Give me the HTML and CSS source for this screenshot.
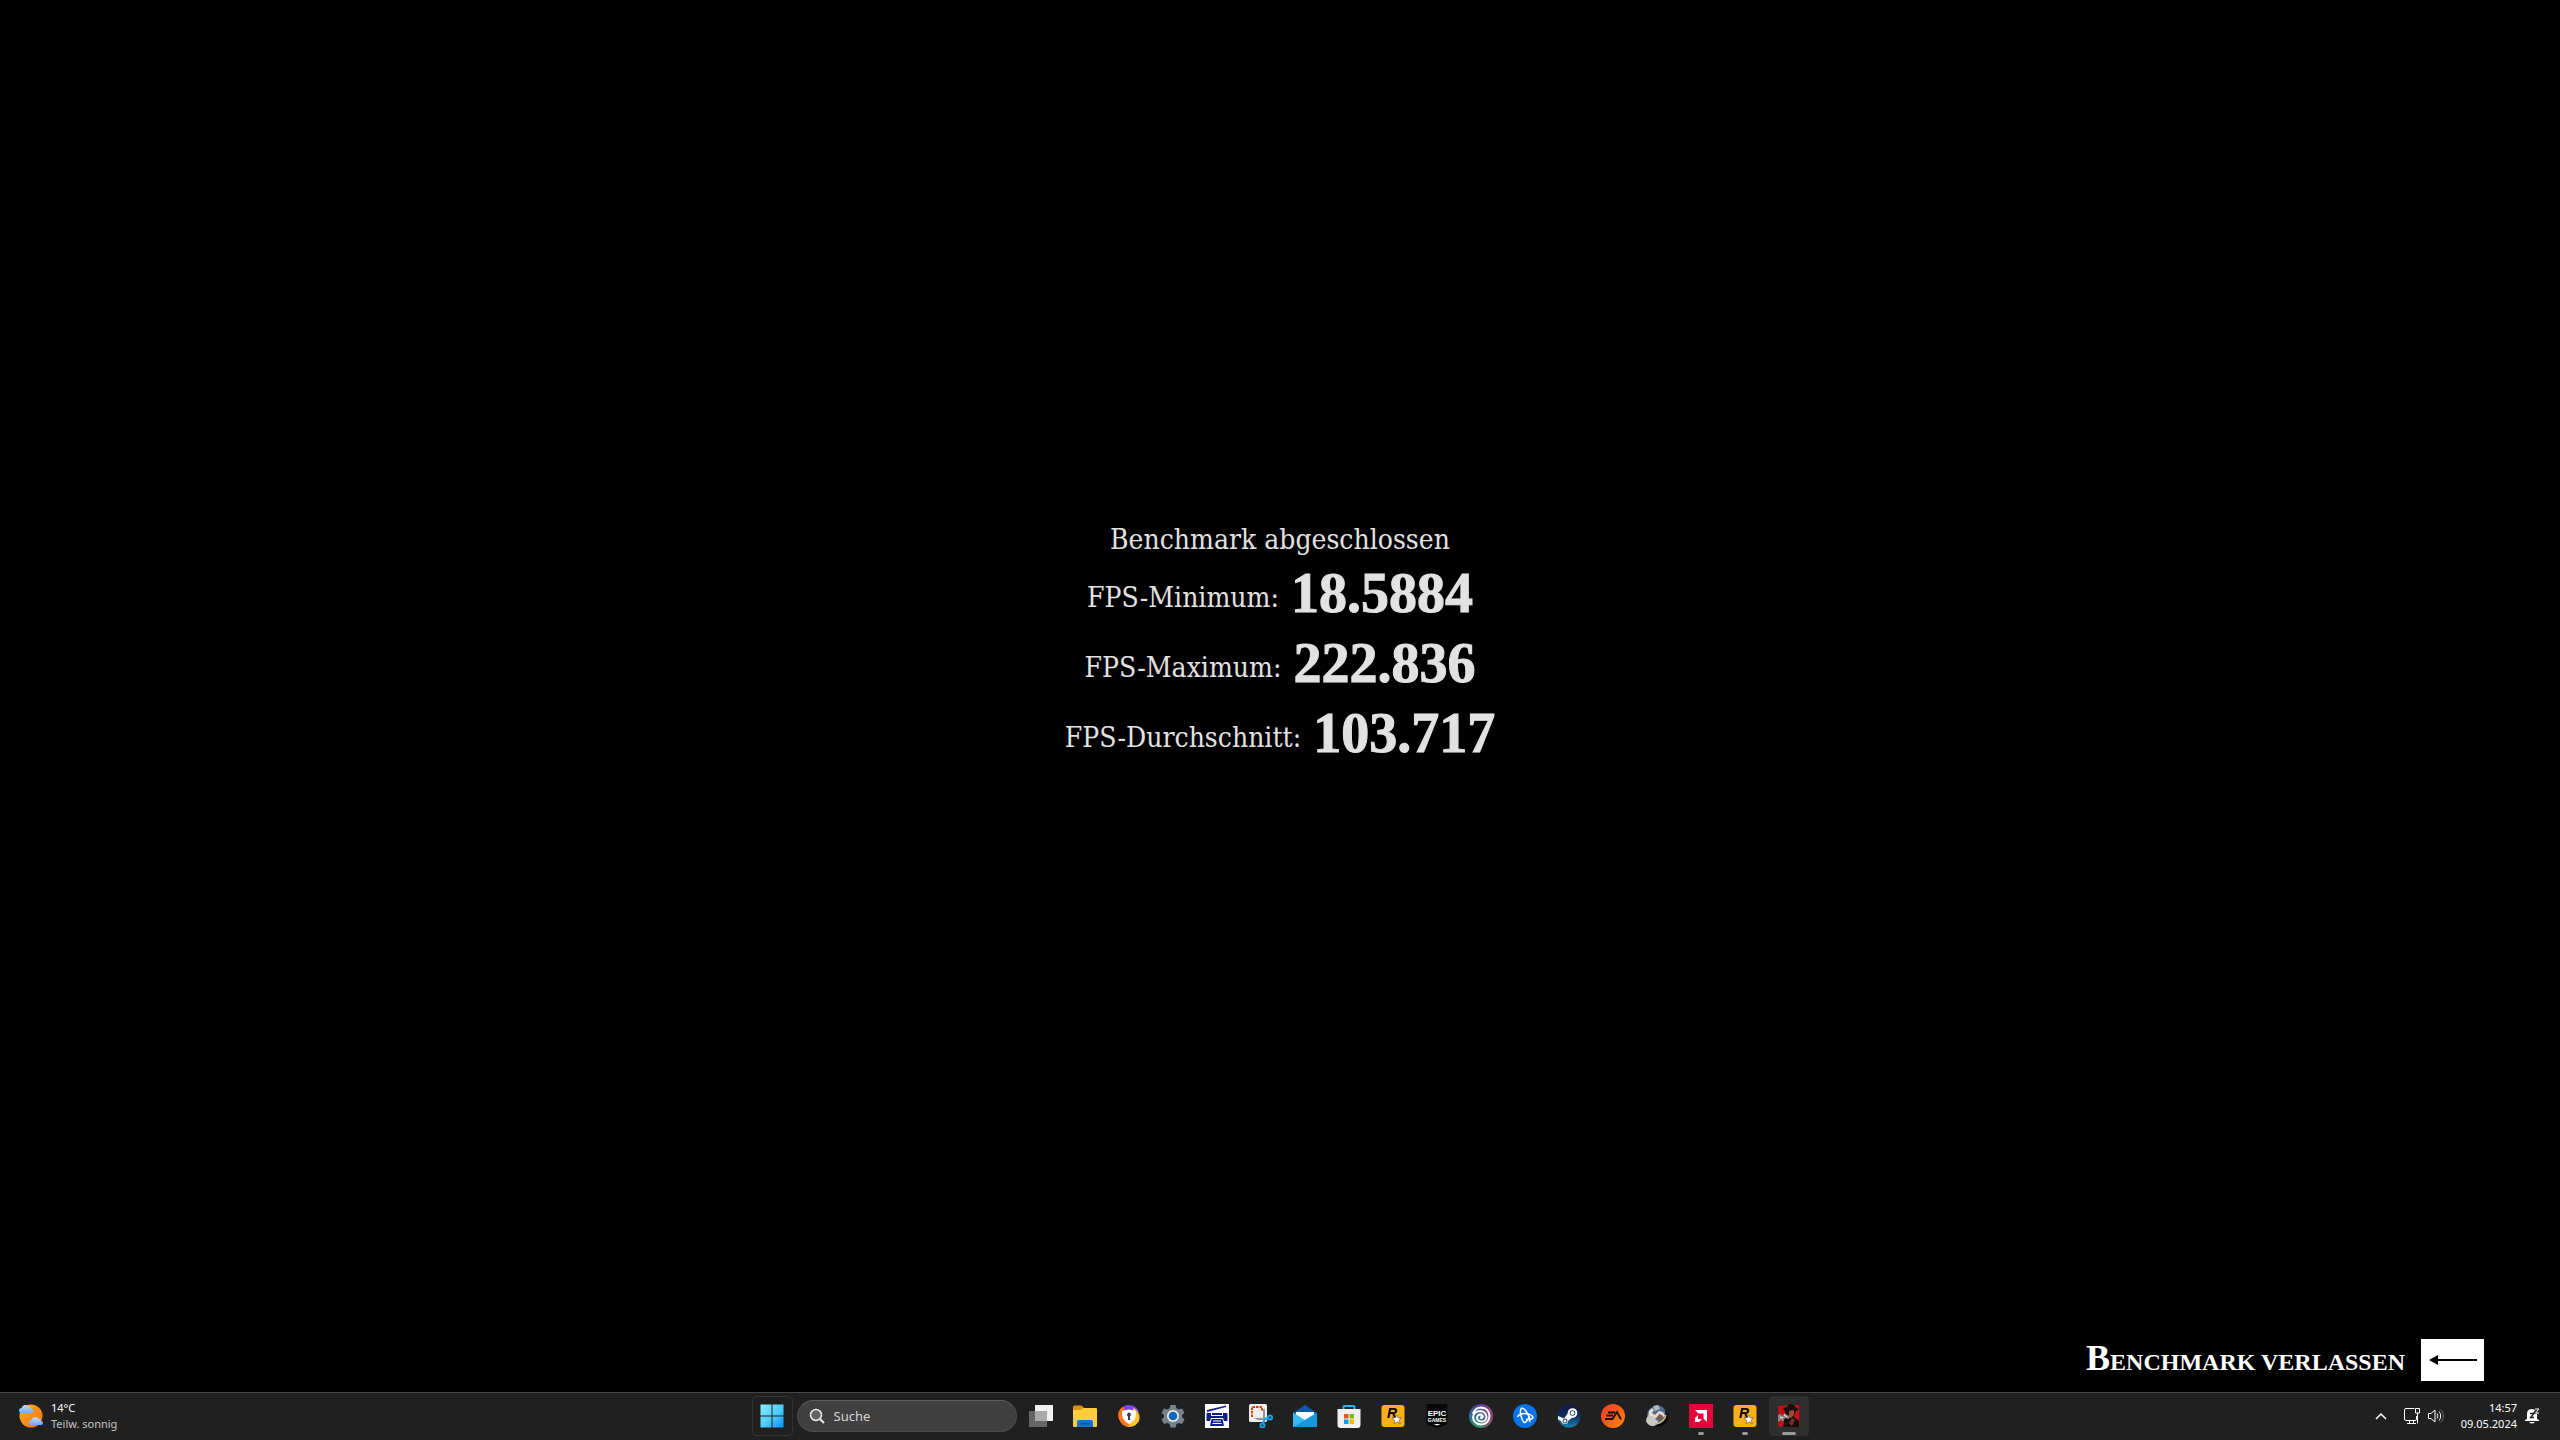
FILE: index.html
```html
<!DOCTYPE html>
<html lang="de">
<head>
  <meta charset="UTF-8">
  <meta name="viewport" content="width=device-width, initial-scale=1.0">
  <title>Benchmark</title>
  <link rel="stylesheet" href="styles.css">
</head>
<body>
  <main class="game">
    <section class="results">
      <h1>Benchmark abgeschlossen</h1>
      <dl class="stats">
        <div class="stat"><dt>FPS-Minimum:</dt><dd>18.5884</dd></div>
        <div class="stat"><dt>FPS-Maximum:</dt><dd>222.836</dd></div>
        <div class="stat"><dt>FPS-Durchschnitt:</dt><dd>103.717</dd></div>
      </dl>
    </section>

    <button class="exit">
      <span class="exit-label">Benchmark verlassen</span>
      <span class="key">
        <svg width="48" height="12" viewBox="0 0 48 12"><path d="M0 6 9 1v4h39v2H9v4z"/></svg>
      </span>
    </button>
  </main>

  <footer class="taskbar">
    <button class="weather">
      <svg width="24" height="24" viewBox="0 0 24 24">
        <defs>
          <linearGradient id="sun" x1="0" y1="0" x2="1" y2="1"><stop offset="0" stop-color="#fcb326"/><stop offset="1" stop-color="#f26a10"/></linearGradient>
          <linearGradient id="cloud" x1="0" y1="0" x2="0" y2="1"><stop offset="0" stop-color="#c3d8fb"/><stop offset="1" stop-color="#7fa6ee"/></linearGradient>
        </defs>
        <circle cx="12" cy="12" r="11.5" fill="url(#sun)"/>
        <path d="M2.500 9a2.500 2.500 0 0 1 0-5A4 4 0 0 1 9.500 2.500 2.500 2.500 0 0 1 12.500 5a2 2 0 0 1 0 4z" fill="url(#cloud)"/>
        <path d="M12.500 21a2.500 2.500 0 0 1 0-5 4 4 0 0 1 7-1.500 2.500 2.500 0 0 1 2.500 2.500 2 2 0 0 1 0 4z" fill="url(#cloud)"/>
      </svg>
      <span class="weather-text"><span>14°C</span><span class="dim">Teilw. sonnig</span></span>
    </button>

    <nav class="apps" aria-label="Apps">
      <button class="app start" aria-label="Start">
        <svg width="24" height="24" viewBox="0 0 24 24">
          <defs><linearGradient id="win" gradientUnits="userSpaceOnUse" x1="0" y1="0" x2="24" y2="24"><stop offset="0" stop-color="#8cf0ff"/><stop offset=".55" stop-color="#4ccbfa"/><stop offset="1" stop-color="#0a8bfa"/></linearGradient></defs>
          <path d="M.5.500h11v11H.5zM12.500.500h11v11h-11zM.5 12.500h11v11H.5zM12.500 12.500h11v11h-11z" fill="url(#win)"/>
        </svg>
      </button>

      <label class="search">
        <svg width="16" height="16" viewBox="0 0 16 16"><circle cx="7" cy="7" r="5.500" fill="#666" stroke="#ececec" stroke-width="1.500"/><path d="m11 11 4 4" stroke="#ececec" stroke-width="2"/></svg>
        <input type="text" placeholder="Suche" aria-label="Suche">
      </label>

      <button class="app" aria-label="Taskansicht">
        <svg width="24" height="24" viewBox="0 0 24 24">
          <path d="M6 1h18v16H6z" fill="#f1f1f1"/><path d="M0 7h18v16H0z" fill="#666"/><path d="M6 7h12v10H6z" fill="#aaa"/>
        </svg>
      </button>
      <button class="app" aria-label="Explorer">
        <svg width="24" height="24" viewBox="0 0 24 24">
          <path d="M0 3q0-1.500 1.500-1.500h7L11 4v5H0z" fill="#d9930e"/>
          <path d="M0 6h8l2.500-2H23q1 0 1 1v17q0 1-1 1H1q-1 0-1-1z" fill="#ffcd3e"/>
          <path d="M4 23v-5q0-2 2-2h12q2 0 2 2v5z" fill="#0f74cc"/><path d="M7 19h10v1.500H7z" fill="#0755a0"/>
        </svg>
      </button>
      <button class="app" aria-label="Secure Browser">
        <svg width="24" height="24" viewBox="0 0 24 24">
          <path d="M12 12 6 2.500A11 11 0 0 1 22 8z" fill="#7a45f5"/>
          <path d="M12 12 17 4q8 6 4.500 14A11 11 0 0 1 8 22z" fill="#ffc233"/>
          <path d="M12 12 12 22.500A11 11 0 0 1 6 2.500z" fill="#ff7419"/>
          <path d="M12 5.500 19 7q1 9-7 13Q4 16 5 7z" fill="#fff"/>
          <path d="M12 8.500a2.200 2.200 0 0 1 1 4V16h-2v-3.500a2.200 2.200 0 0 1 1-4z" fill="#343b58"/>
        </svg>
      </button>
      <button class="app" aria-label="Einstellungen">
        <svg width="24" height="24" viewBox="0 0 24 24">
          <path d="m9.500 1-1 3.300-2 1.100-3.500-1L.5 9 3 11v2L.5 15.500 3 20l3.500-1 2 1.100 1 3.400h5l1-3.400 2-1.100 3.500 1 2.500-4.500L21 13v-2l2.500-2L21 4.400l-3.500 1-2-1.100-1-3.300z" fill="#77828c"/>
          <circle cx="12" cy="12" r="6" fill="#e9edf1"/><circle cx="12" cy="12" r="4.300" fill="#0869bd"/>
        </svg>
      </button>
      <button class="app" aria-label="Drucker">
        <svg width="24" height="24" viewBox="0 0 24 24">
          <path d="M0 0h24v24H0z" fill="#fff"/>
          <path d="M2 6 21 1.500V3L2 8zM1.500 10q0-1 1-1H6v3h12V9h3.500q1 0 1 1v7H19l-1-3H6l-1 3H1.500zM7 9h10v2H7zM6.500 15h11l1.500 7H5z" fill="#10208a"/>
          <path d="M8 17h8M7.500 19.500h9" stroke="#fff"/>
        </svg>
      </button>
      <button class="app" aria-label="Snipping Tool">
        <svg width="24" height="24" viewBox="0 0 24 24">
          <rect width="18" height="18" rx="1.500" fill="#eeeeef"/>
          <path d="M3 13V3h10v4" fill="none" stroke="#d4420e" stroke-width="2" stroke-dasharray="2.500 1"/>
          <path d="M14 5h2v9l-2 5zM5 14h10l5-1v2l-5 1H9z" fill="#8c969f"/>
          <g fill="none" stroke="#16a1eb" stroke-width="2"><circle cx="21" cy="13.500" r="2"/><circle cx="13.500" cy="21.500" r="2"/><path d="m14 19 2-4 3-1"/></g>
        </svg>
      </button>
      <button class="app" aria-label="Mail">
        <svg width="24" height="24" viewBox="0 0 24 24">
          <path d="M0 9 12 1l12 8v4H0z" fill="#075ba9"/><path d="M3 8h18v8H3z" fill="#fafafa"/>
          <path d="M0 8.500 12 16l12-7.500V23H0z" fill="#35bdf0"/><path d="M0 23 24 9v14z" fill="#1598e0"/>
        </svg>
      </button>
      <button class="app" aria-label="Microsoft Store">
        <svg width="24" height="24" viewBox="0 0 24 24">
          <path d="M6.500 6V3q0-1 1-1h9q1 0 1 1v3" fill="none" stroke="#2cb2ec" stroke-width="2"/>
          <path d="M.5 5h23v16q0 3-3 3h-17q-3 0-3-3z" fill="#f0f0f0"/>
          <path d="M7 10h4.500v4.500H7z" fill="#f25022"/><path d="M12.500 10H17v4.500h-4.500z" fill="#7fba00"/><path d="M7 15.500h4.500V20H7z" fill="#00a4ef"/><path d="M12.500 15.500H17V20h-4.500z" fill="#ffb900"/>
        </svg>
      </button>
      <button class="app" aria-label="Rockstar Games Launcher">
        <svg width="24" height="24" viewBox="0 0 24 24">
          <rect x=".5" y="1" width="23" height="22" rx="3" fill="#fcaf17"/>
          <text x="6" y="14" class="rockstar">R</text>
          <path d="m16 11 1.200 3 3.300-.3-2.500 2.500 1.300 3.300-3.300-1.700-3 2 .5-3.800-2.500-2.300 3.500-.2z" fill="#fff" stroke="#333" stroke-width=".5"/>
        </svg>
      </button>
      <button class="app" aria-label="Epic Games">
        <svg width="24" height="24" viewBox="0 0 24 24">
          <path d="M1.500 1.500Q1.500 0 3 0h18q1.500 0 1.500 1.500V19q0 1.500-1.500 2l-9 3-9-3q-1.500-.5-1.500-2z" fill="#080808"/>
          <text x="12" y="12" class="epic">EPIC</text><text x="12" y="18" class="epic-games">GAMES</text>
          <path d="M8.500 20h7L12 21.500z" fill="#fff"/>
        </svg>
      </button>
      <button class="app" aria-label="Ubisoft Connect">
        <svg width="24" height="24" viewBox="0 0 24 24">
          <defs><linearGradient id="ubi" x1="0" y1="0" x2="0" y2="1"><stop offset="0" stop-color="#5a3c9c"/><stop offset=".5" stop-color="#2a6f9c"/><stop offset="1" stop-color="#2f9a6a"/></linearGradient><linearGradient id="ubi2"><stop offset=".4" stop-color="#963783" stop-opacity="0"/><stop offset="1" stop-color="#a63c6b"/></linearGradient></defs>
          <circle cx="12" cy="12" r="12" fill="url(#ubi)"/><circle cx="12" cy="12" r="12" fill="url(#ubi2)"/>
          <g fill="none" stroke="#fff" stroke-width="2">
            <path d="M4 10Q6 3.500 12 3.500q8 .5 8.500 8.500-.5 8-8.500 8.500-7-.5-8-7 .500-6 7-6.500 6 .500 6.500 6-.5 4.500-5 4.500-4.500-.5-4.500-4 .5-3 3.500-3 2.500.500 2.500 3"/>
          </g>
          <circle cx="12.500" cy="13.500" r="1.500" fill="#fff"/>
        </svg>
      </button>
      <button class="app" aria-label="Battle.net">
        <svg width="24" height="24" viewBox="0 0 24 24">
          <circle cx="12" cy="12" r="12" fill="#0874e8"/>
          <g fill="none" stroke="#fff" stroke-width="1.500"><path d="M8.500 4q-2 2-.5 8 2 7 4 6.500 2.500-1.500 4.500-6"/><path d="M8.500 4q3 0 6 5.500 3 5 2 8.500"/><path d="M4.500 13Q6 9.500 12 9.500q7 .5 8 4-1 2.500-7 2"/></g>
        </svg>
      </button>
      <button class="app" aria-label="Steam">
        <svg width="24" height="24" viewBox="0 0 24 24">
          <defs><linearGradient id="steam" x2="0" y2="1"><stop stop-color="#101a42"/><stop offset=".5" stop-color="#102d5d"/><stop offset="1" stop-color="#1684b9"/></linearGradient></defs>
          <circle cx="12" cy="12" r="11.500" fill="url(#steam)"/>
          <path d="m1 12 6 2.500 4-5.500 5 4-5 4q0 3-3 3t-4-3L1 15.500z" fill="#fff"/>
          <circle cx="15.500" cy="9" r="3.800" fill="#173359" stroke="#fff" stroke-width="2"/><circle cx="15.500" cy="9" r="2" fill="#fff"/>
          <circle cx="8" cy="17" r="2" fill="none" stroke="#173b6c"/>
        </svg>
      </button>
      <button class="app" aria-label="EA">
        <svg width="24" height="24" viewBox="0 0 24 24">
          <defs><linearGradient id="ea" x1="0" y1="0" x2="1" y2="1"><stop stop-color="#ef3b2d"/><stop offset=".5" stop-color="#fa5d16"/><stop offset="1" stop-color="#ff8b08"/></linearGradient></defs>
          <circle cx="12" cy="12" r="12" fill="url(#ea)"/>
          <path d="M7 8.500h7M5.500 11.500H12M4 15h7.500L16 8l4 7.500" fill="none" stroke="#131313" stroke-width="1.800"/>
        </svg>
      </button>
      <button class="app" aria-label="Globus">
        <svg width="24" height="24" viewBox="0 0 24 24">
          <circle cx="13.500" cy="13" r="9.500" fill="#080808"/>
          <path d="M2 13Q1 5 10 2q7-2 10 4l1 8-7 6-8 2-5-4z" fill="#526b8c"/>
          <path d="m4 7 3-3 2 2-2 3 3 2 4-4 4 1 2 4-3 2-4-2-5 5-5-2z" fill="#dedbd2"/>
          <path d="m8 2 5-1 2 4-5 2z" fill="#b0b8bf"/><path d="m14 10 3 1 2 3-4 3-3-3z" fill="#765a42"/>
          <path d="M2 13q6-3 8 2l3 2q-1 5-5 5-5 0-7-5z" fill="#cbc6c2"/>
          <path d="M10 20q9-1 11-9" fill="none" stroke="#c9b388" stroke-width="1.500"/>
        </svg>
      </button>
      <button class="app running" aria-label="AMD Software">
        <svg width="24" height="24" viewBox="0 0 24 24">
          <path d="M0 0h24v24H0z" fill="#e4063a"/>
          <path d="M6 6h12v12l-3.500-3.500v-5h-5z" fill="#fff"/><path d="M9 11v4h4l-3 3H6v-4z" fill="#fff"/>
        </svg>
      </button>
      <button class="app running" aria-label="Rockstar Games Launcher">
        <svg width="24" height="24" viewBox="0 0 24 24">
          <rect x=".5" y="1" width="23" height="22" rx="3" fill="#fcaf17"/>
          <text x="6" y="14" class="rockstar">R</text>
          <path d="m16 11 1.200 3 3.300-.3-2.500 2.500 1.300 3.300-3.300-1.700-3 2 .5-3.800-2.500-2.300 3.500-.2z" fill="#fff" stroke="#333" stroke-width=".5"/>
        </svg>
      </button>
      <button class="app running active" aria-label="Red Dead Redemption 2">
        <svg width="24" height="24" viewBox="0 0 24 24">
          <path d="M1 2 22 1l.5 21-21 1z" fill="#c21217"/>
          <path d="m6 4 4-1 2-3 5 1 2 3 3 1-4 3-1 5 5 4v6H6l1-5-5-3 1-4 5 1V7z" fill="#180e0e"/>
          <path d="m12 7 5-1v5l-3 3-2-2z" fill="#9b4e37"/>
          <path d="m1 11 3-1 1 2 3-3 2 2 3 1-1 3-4-1-2 4-2-2-3 2z" fill="#8d8587"/>
          <path d="m15 14 3 2-3 6-3-3z" fill="#733126"/><path d="m3 13 3 1M7 11l3 2" stroke="#eee"/>
        </svg>
      </button>
    </nav>

    <div class="tray">
      <button class="tray-btn" aria-label="Ausgeblendete Symbole">
        <svg width="12" height="8" viewBox="0 0 12 8"><path d="m1 7 5-5 5 5" fill="none" stroke="#fff" stroke-width="1.500"/></svg>
      </button>
      <button class="tray-btn quick" aria-label="Netzwerk und Ton">
        <svg width="16" height="16" viewBox="0 0 16 16"><path d="M10.500.500H2Q.5.500.5 2v9q0 1.500 1.500 1.500h9q1.500 0 1.500-1.500V8M5.500 12.500v3m4-3v3M3 15.500h9M11.500.500h4V5h-4zM13.500 5v10.500" fill="none" stroke="#fff"/></svg>
        <svg width="16" height="16" viewBox="0 0 16 16"><g fill="none" stroke="#fff"><path d="M.5 5.500H3l4-3.500v12l-4-3.500H.5zM9 5.500q2 2.500 0 5M11 3.500q3.500 4.500 0 9"/><path d="M13 1.500q5 6.500 0 13" stroke="#666"/></g></svg>
      </button>
      <div class="status">
        <button class="clock"><time>14:57</time><time>09.05.2024</time></button>
        <button class="tray-btn" aria-label="Benachrichtigungen">
          <svg width="16" height="16" viewBox="0 0 16 16">
            <path d="M2 11V6q0-5 5-5 5 0 5 5v5l2 1v1H0v-1zM4 14h6q-3 3-6 0z" fill="#fff"/>
            <path d="M9 .500h4l-3 4h4" fill="none" stroke="#202020" stroke-width="2.500"/>
            <path d="M10 1h4l-3.500 4H14" fill="none" stroke="#fff"/><path d="M5 5.500h4L5.500 9.500H9" fill="none" stroke="#202020" stroke-width="1.300"/>
          </svg>
        </button>
      </div>
    </div>
  </footer>
</body>
</html>
```
FILE: styles.css
```css
* {
  box-sizing: border-box;
}

body {
  margin: 0;
  min-height: 100vh;
  display: flex;
  flex-direction: column;
  background: #000;
  color: #fff;
  font-family: "Noto Sans", sans-serif;
}

button {
  padding: 0;
  border: none;
  background: none;
  color: inherit;
  font: inherit;
}

svg {
  display: block;
  flex: none;
}

/* Benchmark screen */
.game {
  flex: 1;
  display: flex;
  flex-direction: column;
  justify-content: space-between;
  padding: 36vh 76px 10px;
  font-family: "DejaVu Serif Condensed", "DejaVu Serif", serif;
}

.results {
  color: #e2e2e2;
  text-align: center;
}

h1 {
  margin: 0;
  font-size: 28px;
  font-weight: normal;
  line-height: 44px;
}

.stats {
  margin: 0;
}

.stat {
  display: flex;
  justify-content: center;
  align-items: center;
  gap: 12px;
  height: 70px;
}

.stat dt {
  font-size: 28px;
}

.stat dd {
  margin: 0;
  padding-bottom: 8px;
  font-family: "Liberation Serif", serif;
  font-size: 56px;
  font-weight: bold;
  -webkit-text-stroke: 1px #e2e2e2;
}

.exit {
  align-self: flex-end;
  display: flex;
  align-items: center;
  gap: 16px;
}

.exit-label {
  display: block;
  font-family: "Liberation Serif", serif;
  font-size: 24px;
  font-weight: bold;
  line-height: 40px;
  text-transform: uppercase;
}

.exit-label::first-letter {
  font-size: 36px;
}

.key {
  display: flex;
  align-items: center;
  justify-content: center;
  width: 63px;
  height: 42px;
  background: #fff;
}

/* Taskbar */
.taskbar {
  display: grid;
  grid-template-columns: 1fr auto 1fr;
  align-items: center;
  height: 48px;
  padding: 0 19px 1px;
  border-top: 1px solid #484848;
  background: #202020;
  font-size: 11px;
}

.weather {
  justify-self: start;
  display: flex;
  align-items: center;
  gap: 8px;
  text-align: left;
}

.weather-text,
.clock {
  display: flex;
  flex-direction: column;
  line-height: 16px;
}

.dim {
  color: #c4c4c4;
}

.apps {
  display: flex;
  align-items: center;
  gap: 4px;
}

.app {
  position: relative;
  display: flex;
  align-items: center;
  justify-content: center;
  width: 40px;
  height: 40px;
  border-radius: 4px;
}

.start {
  width: 41px;
  border: 1px solid #343434;
}

.active {
  background: #2e2e2e;
}

.running::after {
  content: "";
  position: absolute;
  bottom: 1px;
  width: 6px;
  height: 3px;
  border-radius: 2px;
  background: #999;
}

.active::after {
  width: 14px;
}

.search {
  display: flex;
  align-items: center;
  gap: 9px;
  width: 220px;
  height: 32px;
  padding: 0 11px;
  border: 1px solid #4b4b4b;
  border-top-color: #5e5e5e;
  border-radius: 16px;
  background: #404040;
}

.search input {
  width: 100%;
  min-width: 0;
  padding: 0;
  border: none;
  outline: none;
  background: none;
  color: #d5d5d5;
  font: 13px "Noto Sans", sans-serif;
}

.search input::placeholder {
  color: #d5d5d5;
}

.rockstar {
  font: italic bold 14px "Liberation Sans", sans-serif;
}

.epic,
.epic-games {
  fill: #fff;
  font: bold 8px "Liberation Sans Narrow", "Liberation Sans", sans-serif;
  text-anchor: middle;
}

.epic-games {
  font-size: 5px;
}

.tray {
  justify-self: end;
  display: flex;
  align-items: center;
  gap: 17px;
}

.quick,
.status {
  display: flex;
  align-items: center;
  gap: 8px;
}

.clock {
  text-align: right;
}
```
